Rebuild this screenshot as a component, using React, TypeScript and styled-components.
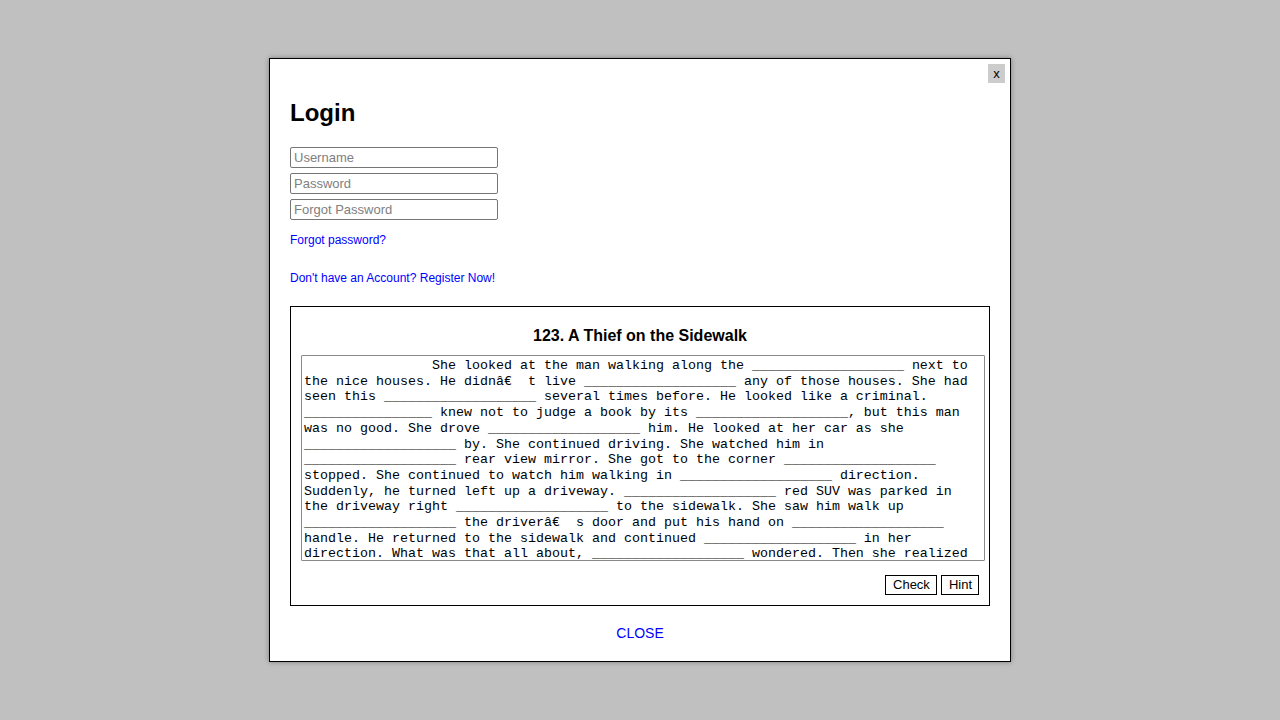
import React from "react";
import styled, { createGlobalStyle } from "styled-components";

const GlobalStyle = createGlobalStyle`
  html, body { margin: 0; padding: 0; }
  body {
    background: #c0c0c0;
    font-family: "Liberation Sans", Arial, sans-serif;
  }
`;

const Overlay = styled.div`
  height: 100vh;
  display: flex;
  align-items: center;
  justify-content: center;
`;

const Modal = styled.div`
  position: relative;
  box-sizing: border-box;
  width: 742px;
  background: #fff;
  border: 1px solid #000;
  box-shadow: 0 0 5px rgba(0, 0, 0, 0.35);
  padding: 40px 20px 20px;
  display: flex;
  flex-direction: column;
`;

const CloseX = styled.button`
  position: absolute;
  top: 5px;
  right: 5px;
  width: 17px;
  height: 19px;
  padding: 0;
  border: none;
  background: #cccccc;
  color: #000;
  font: 13px "Liberation Sans", Arial, sans-serif;
  line-height: 19px;
  cursor: pointer;
`;

const Title = styled.h2`
  margin: 0 0 20px;
  font-size: 24px;
  line-height: 28px;
  font-weight: bold;
  color: #000;
`;

const Field = styled.input`
  box-sizing: border-box;
  display: block;
  width: 208px;
  height: 21px;
  margin: 0 0 5px;
  padding: 1px 3px;
  border: 1px solid #767676;
  border-radius: 2px;
  font: 13px "Liberation Sans", Arial, sans-serif;
  color: #000;
  &:last-of-type { margin-bottom: 0; }
  &::placeholder { color: #808080; }
`;

const Fields = styled.div`
  display: flex;
  flex-direction: column;
`;

const TextLink = styled.a<{ $gap: number }>`
  display: block;
  margin-top: ${(p) => p.$gap}px;
  font-size: 12px;
  line-height: 14px;
  color: #0000ff;
  text-decoration: none;
`;

const Exercise = styled.section`
  box-sizing: border-box;
  height: 300px;
  margin-top: 21px;
  border: 1px solid #000;
  padding: 20px 10px 9px;
  display: flex;
  flex-direction: column;
`;

const ExerciseTitle = styled.h3`
  margin: 0;
  text-align: center;
  font-size: 16px;
  line-height: 18px;
  font-weight: bold;
  color: #000;
`;

const StoryBox = styled.textarea`
  box-sizing: border-box;
  width: 684px;
  height: 206px;
  margin-top: 10px;
  padding: 2px 2px 0;
  border: 1px solid #8a8a8a;
  border-radius: 1px;
  resize: none;
  font-family: "Liberation Mono", "Courier New", monospace;
  font-size: 13.333px;
  line-height: 15.7px;
  color: #000;
  background: #fff;
  scrollbar-width: none;
  &::-webkit-scrollbar { display: none; }
`;

const ButtonRow = styled.div`
  margin-top: 14px;
  display: flex;
  justify-content: flex-end;
  gap: 4px;
`;

const SmallButton = styled.button`
  box-sizing: border-box;
  height: 20px;
  padding: 0 6px 0 7px;
  border: 1px solid #000;
  border-radius: 0;
  background: #fff;
  color: #000;
  font: 13px "Liberation Sans", Arial, sans-serif;
  line-height: 18px;
  cursor: pointer;
`;

const CloseLink = styled.a`
  margin-top: 19px;
  align-self: center;
  font-size: 14px;
  line-height: 16px;
  color: #0000ff;
  text-decoration: none;
`;

const B = "_".repeat(19);
const B16 = "_".repeat(16);

const story =
  "                She looked at the man walking along the " + B +
  " next to the nice houses. He didnâ€  t live " + B +
  " any of those houses. She had seen this " + B +
  " several times before. He looked like a criminal. " + B16 +
  " knew not to judge a book by its " + B +
  ", but this man was no good. She drove " + B +
  " him. He looked at her car as she " + B +
  " by. She continued driving. She watched him in " + B +
  " rear view mirror. She got to the corner " + B +
  " stopped. She continued to watch him walking in " + B +
  " direction. Suddenly, he turned left up a driveway. " + B +
  " red SUV was parked in the driveway right " + B +
  " to the sidewalk. She saw him walk up " + B +
  " the driverâ€  s door and put his hand on " + B +
  " handle. He returned to the sidewalk and continued " + B +
  " in her direction. What was that all about, " + B +
  " wondered. Then she realized " + B +
  " he was doing. He was checking to see " + B +
  " the car doors were unlocked. She " + B +
  " her cell phone and called the police.";

export default function App() {
  return (
    <>
      <GlobalStyle />
      <Overlay>
        <Modal>
          <CloseX type="button">x</CloseX>
          <Title>Login</Title>
          <Fields>
            <Field type="text" placeholder="Username" />
            <Field type="password" placeholder="Password" />
            <Field type="text" placeholder="Forgot Password" />
          </Fields>
          <TextLink href="#" $gap={13}>Forgot password?</TextLink>
          <TextLink href="#" $gap={24}>Don't have an Account? Register Now!</TextLink>
          <Exercise>
            <ExerciseTitle>123. A Thief on the Sidewalk</ExerciseTitle>
            <StoryBox defaultValue={story} spellCheck={false} />
            <ButtonRow>
              <SmallButton type="button">Check</SmallButton>
              <SmallButton type="button">Hint</SmallButton>
            </ButtonRow>
          </Exercise>
          <CloseLink href="#">CLOSE</CloseLink>
        </Modal>
      </Overlay>
    </>
  );
}
